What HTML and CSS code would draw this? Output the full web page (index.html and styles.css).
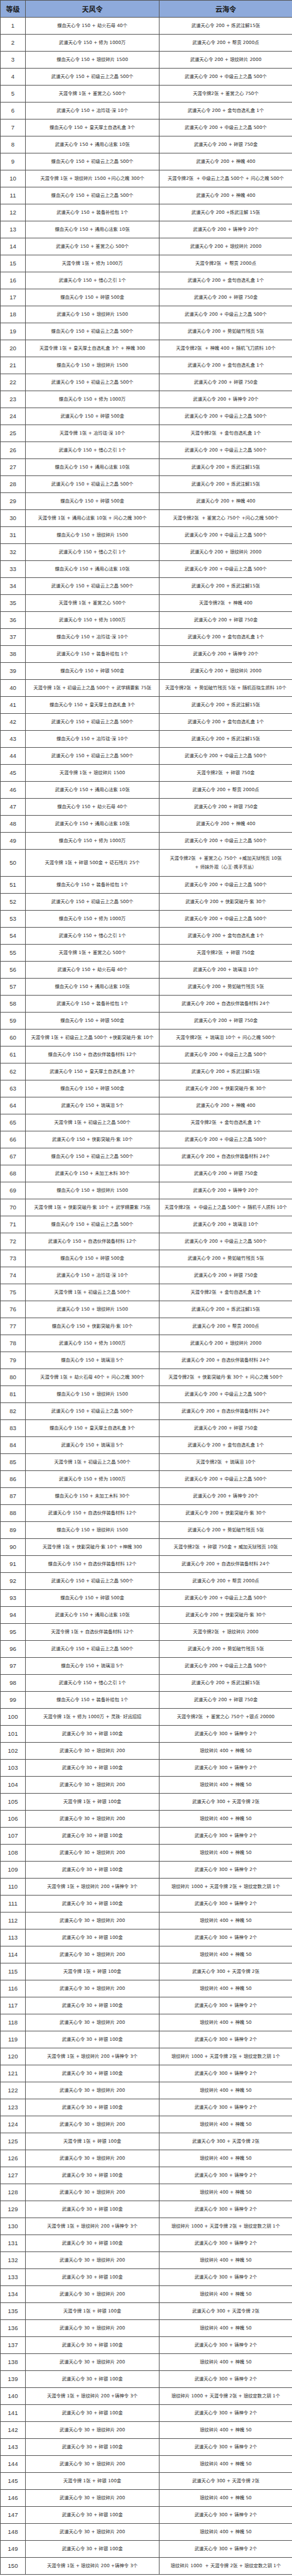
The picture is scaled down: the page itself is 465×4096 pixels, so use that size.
FILE: index.html
```html
<!DOCTYPE html>
<html lang="zh-CN">
<head>
<meta charset="utf-8">
<title>天风令 / 云海令 等级奖励</title>
<link rel="stylesheet" href="styles.css">
</head>
<body>
<table class="rewards">
<colgroup><col class="c-lv"><col class="c-a"><col class="c-b"></colgroup>
<thead>
<tr class="head"><th>等级</th><th>天风令</th><th>云海令</th></tr>
</thead>
<tbody>
<tr><td class="lv">1</td><td>蝶血天心令 150 + 劫火石母 40个</td><td>武道天心令 200 + 炼武注解15张</td></tr>
<tr><td class="lv">2</td><td>武道天心令 150 + 修为 1000万</td><td>武道天心令 200 + 帮贡 2000点</td></tr>
<tr><td class="lv">3</td><td>蝶血天心令 150 + 琅纹碎片 1500</td><td>武道天心令 200 + 琅纹碎片 2000</td></tr>
<tr><td class="lv">4</td><td>武道天心令 150 + 初级云上之晶 500个</td><td>武道天心令 200 + 中级云上之晶 500个</td></tr>
<tr><td class="lv">5</td><td>天涯令牌 1张 + 鉴赏之心 500个</td><td>天涯令牌2张 + 鉴赏之心 750个</td></tr>
<tr><td class="lv">6</td><td>武道天心令 150 + 冶玲珑·深 10个</td><td>武道天心令 200 + 金句自选礼盒 1个</td></tr>
<tr><td class="lv">7</td><td>蝶血天心令 150 + 皇天厚土自选礼盒 3个</td><td>武道天心令 200 + 中级云上之晶 500个</td></tr>
<tr><td class="lv">8</td><td>武道天心令 150 + 通用心法紫 10张</td><td>武道天心令 200 + 碎银 750金</td></tr>
<tr><td class="lv">9</td><td>蝶血天心令 150 + 初级云上之晶 500个</td><td>武道天心令 200 + 神魄 400</td></tr>
<tr><td class="lv">10</td><td>天涯令牌 1张 + 琅纹碎片 1500 +问心之魄 300个</td><td>天涯令牌2张&nbsp; + 中级云上之晶 500个 + 问心之魄 500个</td></tr>
<tr><td class="lv">11</td><td>蝶血天心令 150 + 初级云上之晶 500个</td><td>武道天心令 200 + 神魄 400</td></tr>
<tr><td class="lv">12</td><td>武道天心令 150 + 装备补给包 1个</td><td>武道天心令 200 +炼武注解 15张</td></tr>
<tr><td class="lv">13</td><td>蝶血天心令 150 + 通用心法紫 10张</td><td>武道天心令 200 + 铸神令 20个</td></tr>
<tr><td class="lv">14</td><td>武道天心令 150 + 鉴赏之心 500个</td><td>武道天心令 200 + 琅纹碎片 2000</td></tr>
<tr><td class="lv">15</td><td>天涯令牌 1张 + 修为 1000万</td><td>天涯令牌2张&nbsp; + 帮贡 2000点</td></tr>
<tr><td class="lv">16</td><td>武道天心令 150 + 惜心之引 1个</td><td>武道天心令 200 + 金句自选礼盒 1个</td></tr>
<tr><td class="lv">17</td><td>蝶血天心令 150 + 碎银 500金</td><td>武道天心令 200 + 碎银 750金</td></tr>
<tr><td class="lv">18</td><td>武道天心令 150 + 琅纹碎片 1500</td><td>武道天心令 200 + 中级云上之晶 500个</td></tr>
<tr><td class="lv">19</td><td>蝶血天心令 150 + 初级云上之晶 500个</td><td>武道天心令 200 + 势如破竹残页 5张</td></tr>
<tr><td class="lv">20</td><td>天涯令牌 1张 + 皇天厚土自选礼盒 3个 + 神魄 300</td><td>天涯令牌2张&nbsp; + 神魄 400 + 随机飞刀质料 10个</td></tr>
<tr><td class="lv">21</td><td>蝶血天心令 150 + 琅纹碎片 1500</td><td>武道天心令 200 + 金句自选礼盒 1个</td></tr>
<tr><td class="lv">22</td><td>武道天心令 150 + 初级云上之晶 500个</td><td>武道天心令 200 + 碎银 750金</td></tr>
<tr><td class="lv">23</td><td>蝶血天心令 150 + 修为 1000万</td><td>武道天心令 200 + 铸神令 20个</td></tr>
<tr><td class="lv">24</td><td>武道天心令 150 + 碎银 500金</td><td>武道天心令 200 + 中级云上之晶 500个</td></tr>
<tr><td class="lv">25</td><td>天涯令牌 1张 + 冶玲珑·深 10个</td><td>天涯令牌2张&nbsp; + 金句自选礼盒 1个</td></tr>
<tr><td class="lv">26</td><td>武道天心令 150 + 惜心之引 1个</td><td>武道天心令 200 + 中级云上之晶 500个</td></tr>
<tr><td class="lv">27</td><td>蝶血天心令 150 + 通用心法紫 10张</td><td>武道天心令 200 + 炼武注解15张</td></tr>
<tr><td class="lv">28</td><td>武道天心令 150 + 初级云上之晶 500个</td><td>武道天心令 200 + 炼武注解15张</td></tr>
<tr><td class="lv">29</td><td>蝶血天心令 150 + 碎银 500金</td><td>武道天心令 200 + 神魄 400</td></tr>
<tr><td class="lv">30</td><td>天涯令牌 1张 + 通用心法紫 10张 + 问心之魄 300个</td><td>天涯令牌2张&nbsp; + 鉴赏之心 750个 +问心之魄 500个</td></tr>
<tr><td class="lv">31</td><td>蝶血天心令 150 + 琅纹碎片 1500</td><td>武道天心令 200 + 中级云上之晶 500个</td></tr>
<tr><td class="lv">32</td><td>武道天心令 150 + 惜心之引 1个</td><td>武道天心令 200 + 琅纹碎片 2000</td></tr>
<tr><td class="lv">33</td><td>蝶血天心令 150 + 通用心法紫 10张</td><td>武道天心令 200 + 中级云上之晶 500个</td></tr>
<tr><td class="lv">34</td><td>武道天心令 150 + 初级云上之晶 500个</td><td>武道天心令 200 + 炼武注解15张</td></tr>
<tr><td class="lv">35</td><td>天涯令牌 1张 + 鉴赏之心 500个</td><td>天涯令牌2张&nbsp; + 神魄 400</td></tr>
<tr><td class="lv">36</td><td>武道天心令 150 + 修为 1000万</td><td>武道天心令 200 + 碎银 750金</td></tr>
<tr><td class="lv">37</td><td>蝶血天心令 150 + 冶玲珑·深 10个</td><td>武道天心令 200 + 金句自选礼盒 1个</td></tr>
<tr><td class="lv">38</td><td>武道天心令 150 + 装备补给包 1个</td><td>武道天心令 200 + 铸神令 20个</td></tr>
<tr><td class="lv">39</td><td>蝶血天心令 150 + 碎银 500金</td><td>武道天心令 200 + 琅纹碎片 2000</td></tr>
<tr><td class="lv">40</td><td>天涯令牌 1张 + 初级云上之晶 500个 + 武学精要紫 75张</td><td>天涯令牌2张&nbsp; + 势如破竹残页 5张 + 随机百晓生质料 10个</td></tr>
<tr><td class="lv">41</td><td>蝶血天心令 150 + 皇天厚土自选礼盒 3个</td><td>武道天心令 200 + 炼武注解15张</td></tr>
<tr><td class="lv">42</td><td>武道天心令 150 + 初级云上之晶 500个</td><td>武道天心令 200 + 金句自选礼盒 1个</td></tr>
<tr><td class="lv">43</td><td>蝶血天心令 150 + 冶玲珑·深 10个</td><td>武道天心令 200 + 炼武注解15张</td></tr>
<tr><td class="lv">44</td><td>武道天心令 150 + 初级云上之晶 500个</td><td>武道天心令 200 + 中级云上之晶 500个</td></tr>
<tr><td class="lv">45</td><td>天涯令牌 1张 + 琅纹碎片 1500</td><td>天涯令牌2张&nbsp; + 碎银 750金</td></tr>
<tr><td class="lv">46</td><td>武道天心令 150 + 通用心法紫 10张</td><td>武道天心令 200 + 帮贡 2000点</td></tr>
<tr><td class="lv">47</td><td>蝶血天心令 150 + 劫火石母 40个</td><td>武道天心令 200 + 碎银 750金</td></tr>
<tr><td class="lv">48</td><td>武道天心令 150 + 通用心法紫 10张</td><td>武道天心令 200 + 神魄 400</td></tr>
<tr><td class="lv">49</td><td>蝶血天心令 150 + 修为 1000万</td><td>武道天心令 200 + 中级云上之晶 500个</td></tr>
<tr class="tall"><td class="lv">50</td><td>天涯令牌 1张 + 碎银 500金 + 砭石残片 25个</td><td>天涯令牌2张&nbsp; + 鉴赏之心 750个 +威加天狱残页 10张<br>+ 师妹外观（心王·携手芳丛）</td></tr>
<tr><td class="lv">51</td><td>蝶血天心令 150 + 装备补给包 1个</td><td>武道天心令 200 + 中级云上之晶 500个</td></tr>
<tr><td class="lv">52</td><td>武道天心令 150 + 初级云上之晶 500个</td><td>武道天心令 200 + 侠影突破丹·紫 30个</td></tr>
<tr><td class="lv">53</td><td>蝶血天心令 150 + 修为 1000万</td><td>武道天心令 200 + 中级云上之晶 500个</td></tr>
<tr><td class="lv">54</td><td>武道天心令 150 + 惜心之引 1个</td><td>武道天心令 200 + 金句自选礼盒 1个</td></tr>
<tr><td class="lv">55</td><td>天涯令牌 1张 + 鉴赏之心 500个</td><td>天涯令牌2张&nbsp; + 碎银 750金</td></tr>
<tr><td class="lv">56</td><td>武道天心令 150 + 劫火石母 40个</td><td>武道天心令 200 + 琉璃泪 10个</td></tr>
<tr><td class="lv">57</td><td>蝶血天心令 150 + 通用心法紫 10张</td><td>武道天心令 200 + 势如破竹残页 5张</td></tr>
<tr><td class="lv">58</td><td>武道天心令 150 + 装备补给包 1个</td><td>武道天心令 200 + 自选伙伴装备材料 24个</td></tr>
<tr><td class="lv">59</td><td>蝶血天心令 150 + 碎银 500金</td><td>武道天心令 200 + 碎银 750金</td></tr>
<tr><td class="lv">60</td><td>天涯令牌 1张 + 初级云上之晶 500个 +侠影突破丹·紫 10个</td><td>天涯令牌2张&nbsp; + 琉璃泪 10个 + 问心之魄 500个</td></tr>
<tr><td class="lv">61</td><td>蝶血天心令 150 + 自选伙伴装备材料 12个</td><td>武道天心令 200 + 中级云上之晶 500个</td></tr>
<tr><td class="lv">62</td><td>武道天心令 150 + 皇天厚土自选礼盒 3个</td><td>武道天心令 200 + 炼武注解15张</td></tr>
<tr><td class="lv">63</td><td>蝶血天心令 150 + 碎银 500金</td><td>武道天心令 200 + 侠影突破丹·紫 30个</td></tr>
<tr><td class="lv">64</td><td>武道天心令 150 + 琉璃泪 5个</td><td>武道天心令 200 + 神魄 400</td></tr>
<tr><td class="lv">65</td><td>天涯令牌 1张 + 初级云上之晶 500个</td><td>天涯令牌2张&nbsp; + 金句自选礼盒 1个</td></tr>
<tr><td class="lv">66</td><td>武道天心令 150 + 侠影突破丹·紫 10个</td><td>武道天心令 200 + 中级云上之晶 500个</td></tr>
<tr><td class="lv">67</td><td>蝶血天心令 150 + 初级云上之晶 500个</td><td>武道天心令 200 + 自选伙伴装备材料 24个</td></tr>
<tr><td class="lv">68</td><td>武道天心令 150 + 未加工木料 30个</td><td>武道天心令 200 + 碎银 750金</td></tr>
<tr><td class="lv">69</td><td>蝶血天心令 150 + 琅纹碎片 1500</td><td>武道天心令 200 + 铸神令 20个</td></tr>
<tr><td class="lv">70</td><td>天涯令牌 1张 + 侠影突破丹·紫 10个 + 武学精要紫 75张</td><td>天涯令牌2张&nbsp; + 中级云上之晶 500个 + 随机千人质料 10个</td></tr>
<tr><td class="lv">71</td><td>蝶血天心令 150 + 初级云上之晶 500个</td><td>武道天心令 200 + 琉璃泪 10个</td></tr>
<tr><td class="lv">72</td><td>武道天心令 150 + 自选伙伴装备材料 12个</td><td>武道天心令 200 + 中级云上之晶 500个</td></tr>
<tr><td class="lv">73</td><td>蝶血天心令 150 + 碎银 500金</td><td>武道天心令 200 + 势如破竹残页 5张</td></tr>
<tr><td class="lv">74</td><td>武道天心令 150 + 冶玲珑·深 10个</td><td>武道天心令 200 + 碎银 750金</td></tr>
<tr><td class="lv">75</td><td>天涯令牌 1张 + 初级云上之晶 500个</td><td>天涯令牌2张&nbsp; + 金句自选礼盒 1个</td></tr>
<tr><td class="lv">76</td><td>武道天心令 150 + 琅纹碎片 1500</td><td>武道天心令 200 + 炼武注解15张</td></tr>
<tr><td class="lv">77</td><td>蝶血天心令 150 + 侠影突破丹·紫 10个</td><td>武道天心令 200 + 帮贡 2000点</td></tr>
<tr><td class="lv">78</td><td>武道天心令 150 + 修为 1000万</td><td>武道天心令 200 + 琅纹碎片 2000</td></tr>
<tr><td class="lv">79</td><td>蝶血天心令 150 + 琉璃泪 5个</td><td>武道天心令 200 + 自选伙伴装备材料 24个</td></tr>
<tr><td class="lv">80</td><td>天涯令牌 1张 + 劫火石母 40个 + 问心之魄 300个</td><td>天涯令牌2张&nbsp; + 侠影突破丹·紫 30个 + 问心之魄 500个</td></tr>
<tr><td class="lv">81</td><td>蝶血天心令 150 + 琅纹碎片 1500</td><td>武道天心令 200 + 中级云上之晶 500个</td></tr>
<tr><td class="lv">82</td><td>武道天心令 150 + 初级云上之晶 500个</td><td>武道天心令 200 + 自选伙伴装备材料 24个</td></tr>
<tr><td class="lv">83</td><td>蝶血天心令 150 + 皇天厚土自选礼盒 3个</td><td>武道天心令 200 + 碎银 750金</td></tr>
<tr><td class="lv">84</td><td>武道天心令 150 + 琉璃泪 5个</td><td>武道天心令 200 + 金句自选礼盒 1个</td></tr>
<tr><td class="lv">85</td><td>天涯令牌 1张 + 初级云上之晶 500个</td><td>天涯令牌2张&nbsp; + 琉璃泪 10个</td></tr>
<tr><td class="lv">86</td><td>武道天心令 150 + 修为 1000万</td><td>武道天心令 200 + 中级云上之晶 500个</td></tr>
<tr><td class="lv">87</td><td>蝶血天心令 150 + 未加工木料 30个</td><td>武道天心令 200 + 铸神令 20个</td></tr>
<tr><td class="lv">88</td><td>武道天心令 150 + 自选伙伴装备材料 12个</td><td>武道天心令 200 + 侠影突破丹·紫 30个</td></tr>
<tr><td class="lv">89</td><td>蝶血天心令 150 + 琅纹碎片 1500</td><td>武道天心令 200 + 势如破竹残页 5张</td></tr>
<tr><td class="lv">90</td><td>天涯令牌 1张 + 侠影突破丹·紫 10个 +神魄 300</td><td>天涯令牌2张&nbsp; + 碎银 750金 + 威加天狱残页 10张</td></tr>
<tr><td class="lv">91</td><td>蝶血天心令 150 + 自选伙伴装备材料 12个</td><td>武道天心令 200 + 自选伙伴装备材料 24个</td></tr>
<tr><td class="lv">92</td><td>武道天心令 150 + 初级云上之晶 500个</td><td>武道天心令 200 + 帮贡 2000点</td></tr>
<tr><td class="lv">93</td><td>蝶血天心令 150 + 碎银 500金</td><td>武道天心令 200 + 中级云上之晶 500个</td></tr>
<tr><td class="lv">94</td><td>武道天心令 150 + 通用心法紫 10张</td><td>武道天心令 200 + 侠影突破丹·紫 30个</td></tr>
<tr><td class="lv">95</td><td>天涯令牌 1张 + 自选伙伴装备材料 12个</td><td>天涯令牌2张&nbsp; + 琅纹碎片 2000</td></tr>
<tr><td class="lv">96</td><td>武道天心令 150 + 初级云上之晶 500个</td><td>武道天心令 200 + 势如破竹残页 5张</td></tr>
<tr><td class="lv">97</td><td>蝶血天心令 150 + 琉璃泪 5个</td><td>武道天心令 200 + 中级云上之晶 500个</td></tr>
<tr><td class="lv">98</td><td>武道天心令 150 + 惜心之引 1个</td><td>武道天心令 200 + 炼武注解15张</td></tr>
<tr><td class="lv">99</td><td>蝶血天心令 150 + 装备补给包 1个</td><td>武道天心令 200 + 碎银 750金</td></tr>
<tr><td class="lv">100</td><td>天涯令牌 1张 + 修为 1000万 + 灵珠· 好运招招</td><td>天涯令牌2张&nbsp; + 鉴赏之心 750个 +银点 20000</td></tr>
<tr><td class="lv">101</td><td>武道天心令 30 + 碎银 100金</td><td>武道天心令 300 + 铸神令 2个</td></tr>
<tr><td class="lv">102</td><td>武道天心令 30 + 琅纹碎片 200</td><td>琅纹碎片 400 + 神魄 50</td></tr>
<tr><td class="lv">103</td><td>武道天心令 30 + 碎银 100金</td><td>武道天心令 300 + 铸神令 2个</td></tr>
<tr><td class="lv">104</td><td>武道天心令 30 + 琅纹碎片 200</td><td>琅纹碎片 400 + 神魄 50</td></tr>
<tr><td class="lv">105</td><td>天涯令牌 1张 + 碎银 100金</td><td>武道天心令 300 + 天涯令牌 2张</td></tr>
<tr><td class="lv">106</td><td>武道天心令 30 + 琅纹碎片 200</td><td>琅纹碎片 400 + 神魄 50</td></tr>
<tr><td class="lv">107</td><td>武道天心令 30 + 碎银 100金</td><td>武道天心令 300 + 铸神令 2个</td></tr>
<tr><td class="lv">108</td><td>武道天心令 30 + 琅纹碎片 200</td><td>琅纹碎片 400 + 神魄 50</td></tr>
<tr><td class="lv">109</td><td>武道天心令 30 + 碎银 100金</td><td>武道天心令 300 + 铸神令 2个</td></tr>
<tr><td class="lv">110</td><td>天涯令牌 1张 + 琅纹碎片 200 +铸神令 3个</td><td>琅纹碎片 1000 + 天涯令牌 2张 + 琅纹定数之钥 1个</td></tr>
<tr><td class="lv">111</td><td>武道天心令 30 + 碎银 100金</td><td>武道天心令 300 + 铸神令 2个</td></tr>
<tr><td class="lv">112</td><td>武道天心令 30 + 琅纹碎片 200</td><td>琅纹碎片 400 + 神魄 50</td></tr>
<tr><td class="lv">113</td><td>武道天心令 30 + 碎银 100金</td><td>武道天心令 300 + 铸神令 2个</td></tr>
<tr><td class="lv">114</td><td>武道天心令 30 + 琅纹碎片 200</td><td>琅纹碎片 400 + 神魄 50</td></tr>
<tr><td class="lv">115</td><td>天涯令牌 1张 + 碎银 100金</td><td>武道天心令 300 + 天涯令牌 2张</td></tr>
<tr><td class="lv">116</td><td>武道天心令 30 + 琅纹碎片 200</td><td>琅纹碎片 400 + 神魄 50</td></tr>
<tr><td class="lv">117</td><td>武道天心令 30 + 碎银 100金</td><td>武道天心令 300 + 铸神令 2个</td></tr>
<tr><td class="lv">118</td><td>武道天心令 30 + 琅纹碎片 200</td><td>琅纹碎片 400 + 神魄 50</td></tr>
<tr><td class="lv">119</td><td>武道天心令 30 + 碎银 100金</td><td>武道天心令 300 + 铸神令 2个</td></tr>
<tr><td class="lv">120</td><td>天涯令牌 1张 + 琅纹碎片 200 +铸神令 3个</td><td>琅纹碎片 1000 + 天涯令牌 2张 + 琅纹定数之钥 1个</td></tr>
<tr><td class="lv">121</td><td>武道天心令 30 + 碎银 100金</td><td>武道天心令 300 + 铸神令 2个</td></tr>
<tr><td class="lv">122</td><td>武道天心令 30 + 琅纹碎片 200</td><td>琅纹碎片 400 + 神魄 50</td></tr>
<tr><td class="lv">123</td><td>武道天心令 30 + 碎银 100金</td><td>武道天心令 300 + 铸神令 2个</td></tr>
<tr><td class="lv">124</td><td>武道天心令 30 + 琅纹碎片 200</td><td>琅纹碎片 400 + 神魄 50</td></tr>
<tr><td class="lv">125</td><td>天涯令牌 1张 + 碎银 100金</td><td>武道天心令 300 + 天涯令牌 2张</td></tr>
<tr><td class="lv">126</td><td>武道天心令 30 + 琅纹碎片 200</td><td>琅纹碎片 400 + 神魄 50</td></tr>
<tr><td class="lv">127</td><td>武道天心令 30 + 碎银 100金</td><td>武道天心令 300 + 铸神令 2个</td></tr>
<tr><td class="lv">128</td><td>武道天心令 30 + 琅纹碎片 200</td><td>琅纹碎片 400 + 神魄 50</td></tr>
<tr><td class="lv">129</td><td>武道天心令 30 + 碎银 100金</td><td>武道天心令 300 + 铸神令 2个</td></tr>
<tr><td class="lv">130</td><td>天涯令牌 1张 + 琅纹碎片 200 +铸神令 3个</td><td>琅纹碎片 1000 + 天涯令牌 2张 + 琅纹定数之钥 1个</td></tr>
<tr><td class="lv">131</td><td>武道天心令 30 + 碎银 100金</td><td>武道天心令 300 + 铸神令 2个</td></tr>
<tr><td class="lv">132</td><td>武道天心令 30 + 琅纹碎片 200</td><td>琅纹碎片 400 + 神魄 50</td></tr>
<tr><td class="lv">133</td><td>武道天心令 30 + 碎银 100金</td><td>武道天心令 300 + 铸神令 2个</td></tr>
<tr><td class="lv">134</td><td>武道天心令 30 + 琅纹碎片 200</td><td>琅纹碎片 400 + 神魄 50</td></tr>
<tr><td class="lv">135</td><td>天涯令牌 1张 + 碎银 100金</td><td>武道天心令 300 + 天涯令牌 2张</td></tr>
<tr><td class="lv">136</td><td>武道天心令 30 + 琅纹碎片 200</td><td>琅纹碎片 400 + 神魄 50</td></tr>
<tr><td class="lv">137</td><td>武道天心令 30 + 碎银 100金</td><td>武道天心令 300 + 铸神令 2个</td></tr>
<tr><td class="lv">138</td><td>武道天心令 30 + 琅纹碎片 200</td><td>琅纹碎片 400 + 神魄 50</td></tr>
<tr><td class="lv">139</td><td>武道天心令 30 + 碎银 100金</td><td>武道天心令 300 + 铸神令 2个</td></tr>
<tr><td class="lv">140</td><td>天涯令牌 1张 + 琅纹碎片 200 +铸神令 3个</td><td>琅纹碎片 1000 + 天涯令牌 2张 + 琅纹定数之钥 1个</td></tr>
<tr><td class="lv">141</td><td>武道天心令 30 + 碎银 100金</td><td>武道天心令 300 + 铸神令 2个</td></tr>
<tr><td class="lv">142</td><td>武道天心令 30 + 琅纹碎片 200</td><td>琅纹碎片 400 + 神魄 50</td></tr>
<tr><td class="lv">143</td><td>武道天心令 30 + 碎银 100金</td><td>武道天心令 300 + 铸神令 2个</td></tr>
<tr><td class="lv">144</td><td>武道天心令 30 + 琅纹碎片 200</td><td>琅纹碎片 400 + 神魄 50</td></tr>
<tr><td class="lv">145</td><td>天涯令牌 1张 + 碎银 100金</td><td>武道天心令 300 + 天涯令牌 2张</td></tr>
<tr><td class="lv">146</td><td>武道天心令 30 + 琅纹碎片 200</td><td>琅纹碎片 400 + 神魄 50</td></tr>
<tr><td class="lv">147</td><td>武道天心令 30 + 碎银 100金</td><td>武道天心令 300 + 铸神令 2个</td></tr>
<tr><td class="lv">148</td><td>武道天心令 30 + 琅纹碎片 200</td><td>琅纹碎片 400 + 神魄 50</td></tr>
<tr><td class="lv">149</td><td>武道天心令 30 + 碎银 100金</td><td>武道天心令 300 + 铸神令 2个</td></tr>
<tr><td class="lv">150</td><td>天涯令牌 1张 + 琅纹碎片 200 +铸神令 3个</td><td>琅纹碎片 1000&nbsp; + 天涯令牌 2张 + 琅纹定数之钥 1个</td></tr>
</tbody>
</table>
</body>
</html>
```
FILE: styles.css
```css
html, body {
  margin: 0;
  padding: 0;
  background: #ffffff;
}

.rewards {
  width: 465px;
  table-layout: fixed;
  border-collapse: collapse;
  font-family: "DejaVu Sans", "Noto Sans CJK SC", sans-serif;
  font-size: 7.3px;
  color: #2a2a2a;
}

.c-lv { width: 40px; }
.c-a { width: 213px; }
.c-b { width: 212px; }

.rewards tr {
  height: 27px;
}

.rewards tr.tall {
  height: 43px;
}

.rewards th,
.rewards td {
  border: 1px solid #555555;
  padding: 0;
  text-align: center;
  vertical-align: middle;
  white-space: nowrap;
  line-height: 14px;
}

.rewards .head th {
  background: #8eaadb;
  font-family: "Noto Sans CJK SC", sans-serif;
  font-weight: 700;
  font-size: 11px;
  color: #1a1a1a;
}

.rewards td.lv {
  font-family: "Liberation Sans", "DejaVu Sans", sans-serif;
  font-size: 9.5px;
  color: #333333;
}
```
